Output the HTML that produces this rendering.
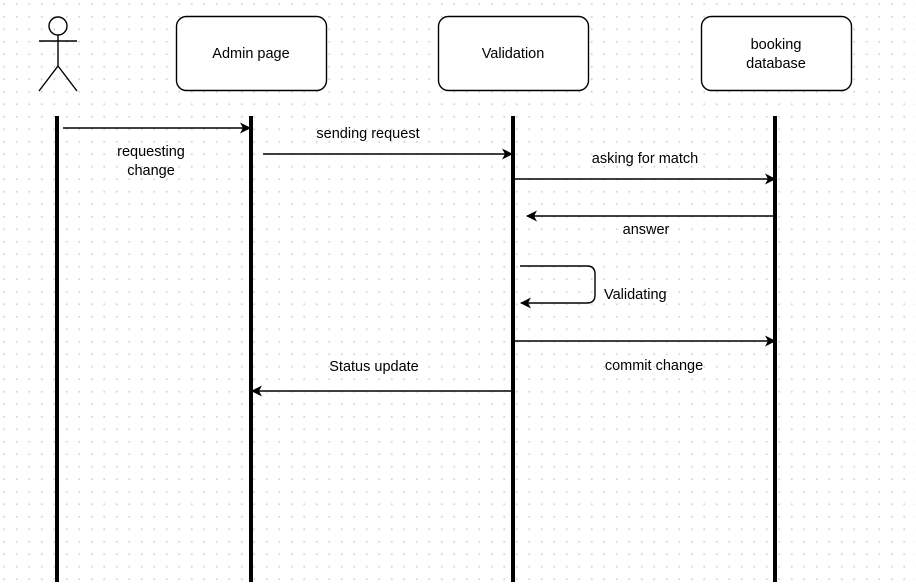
<!DOCTYPE html>
<html><head><style>
html,body{margin:0;padding:0}
body{width:916px;height:582px;overflow:hidden;background:#fff;
background-image:radial-gradient(circle,#d6d6d6 0.8px,transparent 1.2px);background-size:12.5px 12.5px;background-position:-2px -2px}
text{font-family:"Liberation Sans",sans-serif;font-size:14.5px;fill:#000}
</style></head><body>
<svg width="916" height="582" viewBox="0 0 916 582" xmlns="http://www.w3.org/2000/svg">
<defs><marker id="a" markerWidth="12" markerHeight="12" refX="10" refY="5.5" orient="auto" markerUnits="userSpaceOnUse"><path d="M0,0 L11,5.5 L0,11 L3,5.5 Z" fill="#000"/></marker></defs>
<g fill="none" stroke="#000" stroke-width="1.4">
<circle cx="58" cy="26" r="9"/>
<path d="M58 35V66M39 41H77M39 91L58 66L77 91"/>
<rect x="176.5" y="16.5" width="150" height="74" rx="10" fill="#fff"/>
<rect x="438.5" y="16.5" width="150" height="74" rx="10" fill="#fff"/>
<rect x="701.5" y="16.5" width="150" height="74" rx="10" fill="#fff"/>
</g>
<g stroke="#000" stroke-width="4">
<path d="M57 116V582M251 116V582M513 116V582M775 116V582"/>
</g>
<g fill="none" stroke="#000" stroke-width="1.4" marker-end="url(#a)">
<path d="M63 128H250"/>
<path d="M263 154H512"/>
<path d="M515 179H775"/>
<path d="M774 216H527"/>
<path d="M520 266H587Q595 266 595 274V295Q595 303 587 303H521"/>
<path d="M515 341H775"/>
<path d="M512 391H252"/>
</g>
<text x="251" y="58" text-anchor="middle">Admin page</text>
<text x="513" y="58" text-anchor="middle">Validation</text>
<text x="776" y="49" text-anchor="middle">booking</text>
<text x="776" y="68" text-anchor="middle">database</text>
<text x="151" y="156" text-anchor="middle">requesting</text>
<text x="151" y="175" text-anchor="middle">change</text>
<text x="368" y="138" text-anchor="middle">sending request</text>
<text x="645" y="163" text-anchor="middle">asking for match</text>
<text x="646" y="234" text-anchor="middle">answer</text>
<text x="604" y="299">Validating</text>
<text x="654" y="370" text-anchor="middle">commit change</text>
<text x="374" y="371" text-anchor="middle">Status update</text>
</svg>
</body></html>
